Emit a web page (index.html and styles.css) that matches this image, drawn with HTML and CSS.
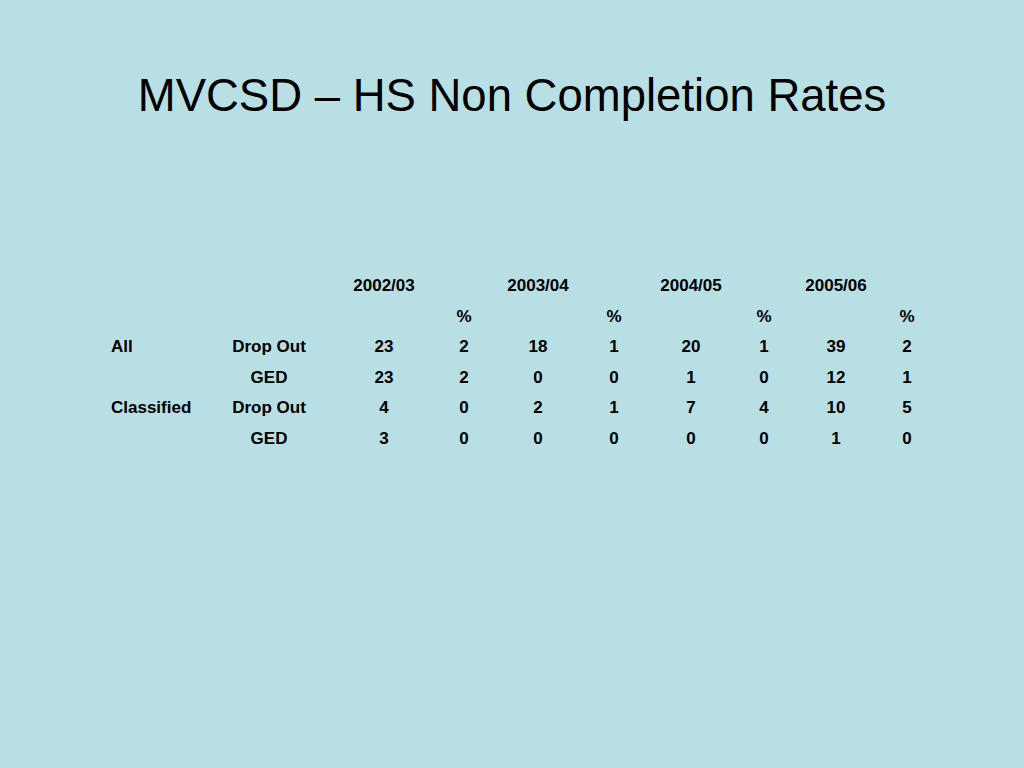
FILE: index.html
```html
<!DOCTYPE html>
<html>
<head>
<meta charset="utf-8">
<link rel="stylesheet" href="styles.css">
</head>
<body>
<div class="slide">
  <h1 class="title">MVCSD – HS Non Completion Rates</h1>
  <table class="data">
    <colgroup>
      <col class="c-group"><col class="c-type"><col class="c-num"><col class="c-pct1">
      <col class="c-num2"><col class="c-pct2"><col class="c-num3"><col class="c-pct3">
      <col class="c-num4"><col class="c-pct4">
    </colgroup>
    <tr><td></td><td></td><td>2002/03</td><td></td><td>2003/04</td><td></td><td>2004/05</td><td></td><td>2005/06</td><td></td></tr>
    <tr><td></td><td></td><td></td><td>%</td><td></td><td>%</td><td></td><td>%</td><td></td><td>%</td></tr>
    <tr><td class="left">All</td><td>Drop Out</td><td>23</td><td>2</td><td>18</td><td>1</td><td>20</td><td>1</td><td>39</td><td>2</td></tr>
    <tr><td class="left"></td><td>GED</td><td>23</td><td>2</td><td>0</td><td>0</td><td>1</td><td>0</td><td>12</td><td>1</td></tr>
    <tr><td class="left">Classified</td><td>Drop Out</td><td>4</td><td>0</td><td>2</td><td>1</td><td>7</td><td>4</td><td>10</td><td>5</td></tr>
    <tr><td class="left"></td><td>GED</td><td>3</td><td>0</td><td>0</td><td>0</td><td>0</td><td>0</td><td>1</td><td>0</td></tr>
  </table>
</div>
</body>
</html>
```
FILE: styles.css
```css
html, body {
  margin: 0;
  padding: 0;
  background: #b8dfe4;
}
.slide {
  width: 1024px;
  height: 768px;
  overflow: hidden;
  padding-top: 70px;
  box-sizing: border-box;
  font-family: "Liberation Sans", Arial, sans-serif;
  color: #000;
}
.title {
  margin: 0;
  font-size: 45.5px;
  font-weight: normal;
  line-height: 52px;
  text-align: center;
}
.data {
  margin: 149px 0 0 111px;
  border-collapse: collapse;
  table-layout: fixed;
  font-size: 17px;
  font-weight: bold;
}
.data td {
  padding: 0;
  height: 30.6px;
  line-height: 30.6px;
  text-align: center;
  white-space: nowrap;
}
.data td.left { text-align: left; }
.c-group { width: 99px; }
.c-type { width: 118px; }
.c-num { width: 112px; }
.c-pct1 { width: 48px; }
.c-num2 { width: 100px; }
.c-pct2 { width: 52px; }
.c-num3 { width: 102px; }
.c-pct3 { width: 44px; }
.c-num4 { width: 100px; }
.c-pct4 { width: 42px; }
```
